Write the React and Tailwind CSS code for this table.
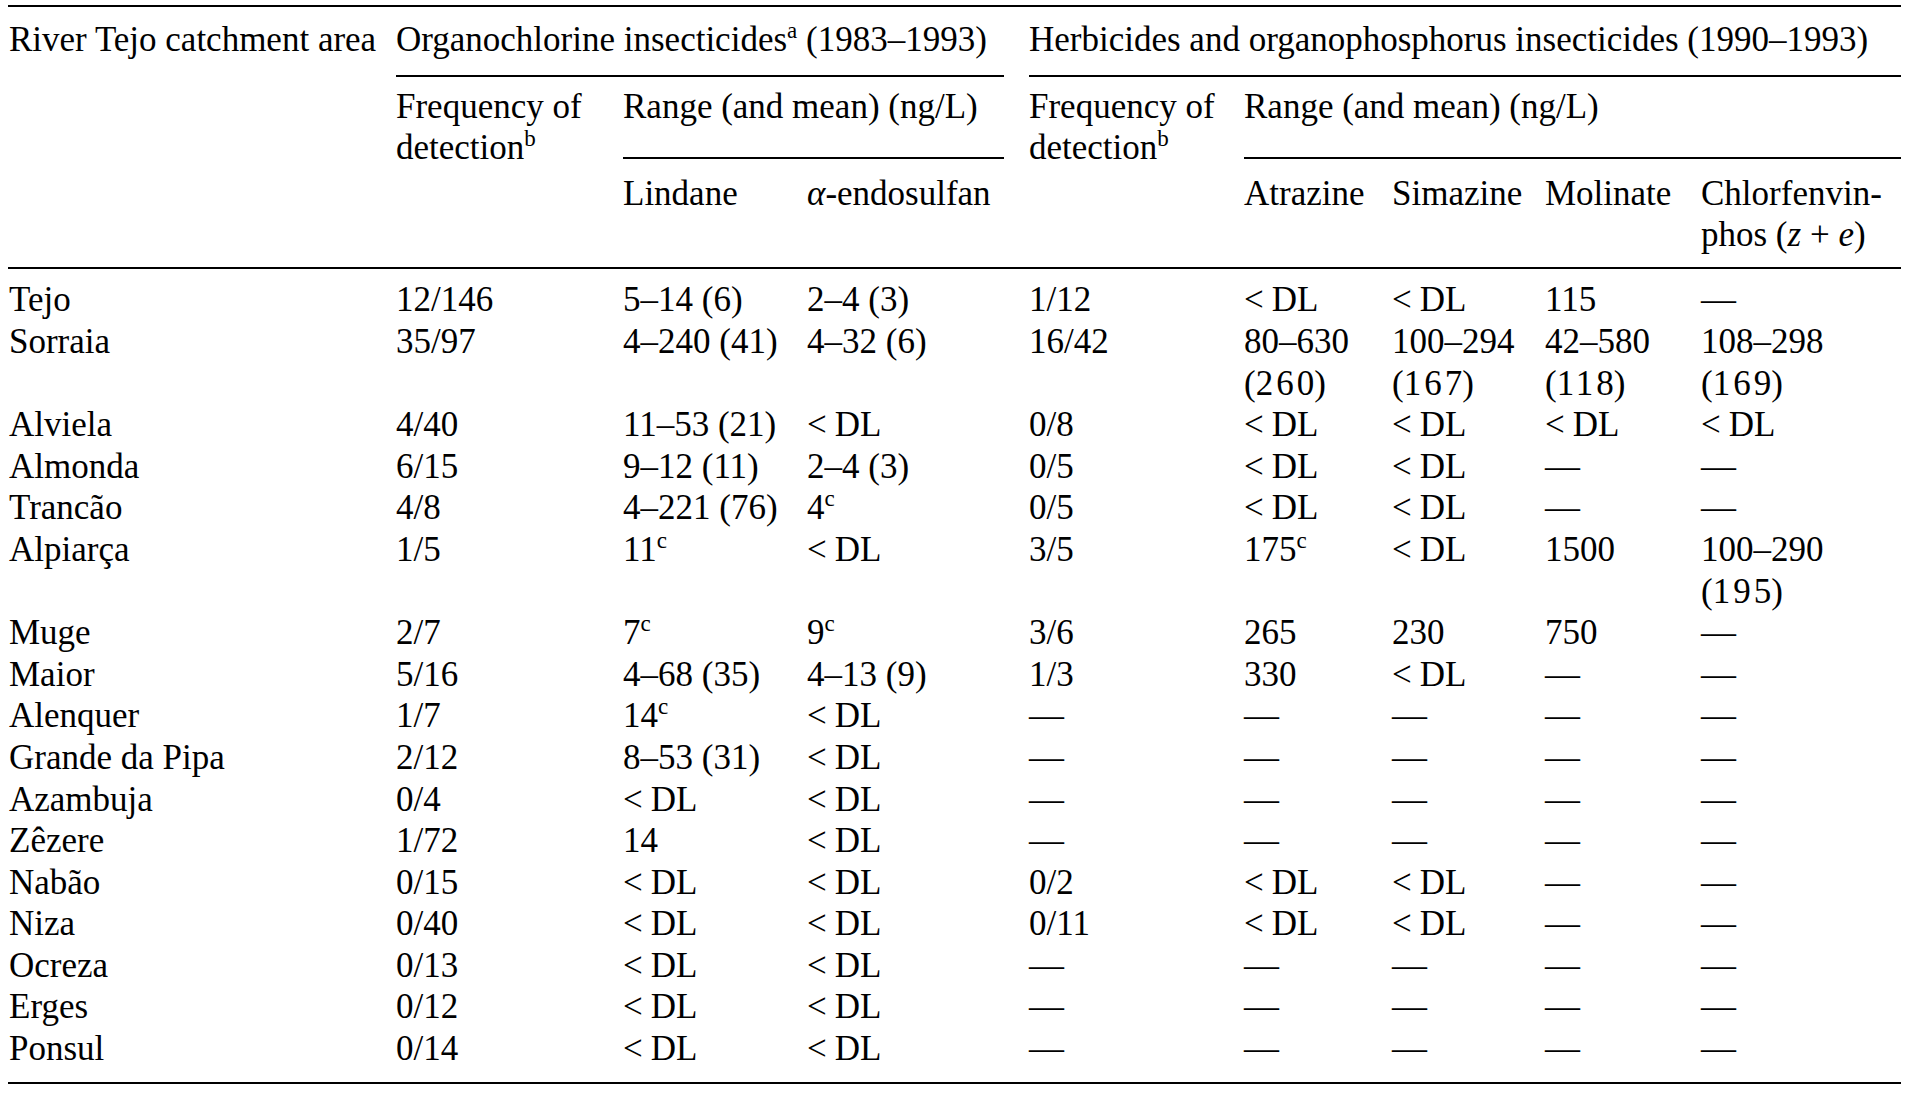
const COLS = 'grid grid-cols-[388px_227px_184px_222px_215px_148px_153px_156px_200px]';

// '<' = <DL, '-' = em dash, '^c' = footnote c, 'a|b' = value with mean on a second line
const ROWS = [
  ['Tejo', '12/146', '5–14 (6)', '2–4 (3)', '1/12', '<', '<', '115', '-'],
  ['Sorraia', '35/97', '4–240 (41)', '4–32 (6)', '16/42', '80–630|260', '100–294|167', '42–580|118', '108–298|169'],
  ['Alviela', '4/40', '11–53 (21)', '<', '0/8', '<', '<', '<', '<'],
  ['Almonda', '6/15', '9–12 (11)', '2–4 (3)', '0/5', '<', '<', '-', '-'],
  ['Trancão', '4/8', '4–221 (76)', '4^c', '0/5', '<', '<', '-', '-'],
  ['Alpiarça', '1/5', '11^c', '<', '3/5', '175^c', '<', '1500', '100–290|195'],
  ['Muge', '2/7', '7^c', '9^c', '3/6', '265', '230', '750', '-'],
  ['Maior', '5/16', '4–68 (35)', '4–13 (9)', '1/3', '330', '<', '-', '-'],
  ['Alenquer', '1/7', '14^c', '<', '-', '-', '-', '-', '-'],
  ['Grande da Pipa', '2/12', '8–53 (31)', '<', '-', '-', '-', '-', '-'],
  ['Azambuja', '0/4', '<', '<', '-', '-', '-', '-', '-'],
  ['Zêzere', '1/72', '14', '<', '-', '-', '-', '-', '-'],
  ['Nabão', '0/15', '<', '<', '0/2', '<', '<', '-', '-'],
  ['Niza', '0/40', '<', '<', '0/11', '<', '<', '-', '-'],
  ['Ocreza', '0/13', '<', '<', '-', '-', '-', '-', '-'],
  ['Erges', '0/12', '<', '<', '-', '-', '-', '-', '-'],
  ['Ponsul', '0/14', '<', '<', '-', '-', '-', '-', '-'],
];

function Sup({ children }) {
  return <sup className="text-[23px] -top-[13px]">{children}</sup>;
}

function Val({ v }) {
  if (v === '<') return <><span className="mr-[8px]">&lt;</span>DL</>;
  if (v === '-') return <>—</>;
  if (v.endsWith('^c')) return <>{v.slice(0, -2)}<Sup>c</Sup></>;
  if (v.includes('|')) {
    const [range, mean] = v.split('|');
    return (
      <>
        {range}<br />
        (<span className="tracking-[3px]">{mean.slice(0, -1)}</span>{mean.slice(-1)})
      </>
    );
  }
  return <>{v}</>;
}

export default function App() {
  return (
    <div className="min-h-screen bg-white pt-[5px] text-black text-[35px] leading-[41.6px] font-['Liberation_Serif','Times_New_Roman',serif]">
      <div className="ml-[8px] w-[1893px] border-t-2 border-black">
        <div className={`${COLS} border-b-2 border-black`}>
          <div className="row-span-3 pt-[12px] pl-[1px] whitespace-nowrap">River Tejo catchment area</div>
          <div className="col-span-3 pt-[12px]">
            <div className="mr-[25px] pb-[14px] border-b-2 border-black whitespace-nowrap">
              Organochlorine insecticides<Sup>a</Sup> (1983–1993)
            </div>
          </div>
          <div className="col-span-5 pt-[12px]">
            <div className="pb-[14px] border-b-2 border-black whitespace-nowrap">
              Herbicides and organophosphorus insecticides (1990–1993)
            </div>
          </div>

          <div className="row-span-2 pt-[9px]">Frequency of<br />detection<Sup>b</Sup></div>
          <div className="col-span-2 pt-[9px]">
            <div className="mr-[25px] pb-[30px] border-b-2 border-black whitespace-nowrap">Range (and mean) (ng/L)</div>
          </div>
          <div className="row-span-2 pt-[9px]">Frequency of<br />detection<Sup>b</Sup></div>
          <div className="col-span-4 pt-[9px]">
            <div className="pb-[30px] border-b-2 border-black whitespace-nowrap">Range (and mean) (ng/L)</div>
          </div>

          <div className="pt-[13.5px]">Lindane</div>
          <div className="pt-[13.5px] whitespace-nowrap"><i>α</i>-endosulfan</div>
          <div className="pt-[13.5px]">Atrazine</div>
          <div className="pt-[13.5px]">Simazine</div>
          <div className="pt-[13.5px]">Molinate</div>
          <div className="pt-[13.5px] pb-[11.5px] whitespace-nowrap">
            Chlorfenvin-<br />phos (<i>z</i> + <i>e</i>)
          </div>
        </div>

        <div className={`${COLS} pt-[10px] pb-[12px] border-b-2 border-black`}>
          {ROWS.map((row) =>
            row.map((v, i) => (
              <div key={`${row[0]}-${i}`} className={i === 0 ? 'pl-[1px] whitespace-nowrap' : 'whitespace-nowrap'}>
                {i === 0 ? v : <Val v={v} />}
              </div>
            ))
          )}
        </div>
      </div>
    </div>
  );
}
